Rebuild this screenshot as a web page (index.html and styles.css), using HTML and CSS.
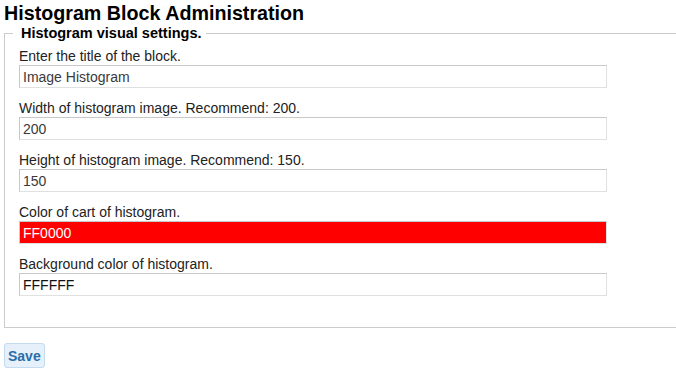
FILE: index.html
```html
<!DOCTYPE html>
<html>
<head>
<meta charset="utf-8">
<link rel="stylesheet" href="styles.css">
</head>
<body>
<h1 class="title">Histogram Block Administration</h1>
<form class="form">
  <fieldset class="box">
    <legend class="legend">Histogram visual settings.</legend>
    <div class="row">
      <label class="label">Enter the title of the block.</label>
      <input class="field" type="text" value="Image Histogram">
    </div>
    <div class="row">
      <label class="label">Width of histogram image. Recommend: 200.</label>
      <input class="field" type="text" value="200">
    </div>
    <div class="row">
      <label class="label">Height of histogram image. Recommend: 150.</label>
      <input class="field" type="text" value="150">
    </div>
    <div class="row">
      <label class="label">Color of cart of histogram.</label>
      <input class="field field-red" type="text" value="FF0000">
    </div>
    <div class="row">
      <label class="label">Background color of histogram.</label>
      <input class="field field-dark" type="text" value="FFFFFF">
    </div>
  </fieldset>
  <button class="save" type="button">Save</button>
</form>
</body>
</html>
```

FILE: styles.css
```css
html, body {
  margin: 0;
  padding: 0;
  background: #fff;
}
body {
  font-family: "Liberation Sans", Arial, sans-serif;
  color: #222;
  width: 700px;
  padding: 2px 0 0 4px;
}
.title {
  margin: 0;
  font-size: 19.7px;
  line-height: 23px;
  font-weight: bold;
  color: #000;
}
.form {
  margin: 0;
}
.box {
  margin: 0;
  border: 1px solid #ccc;
  border-right: none;
  padding: 0 0 31px 14px;
}
.legend {
  font-size: 14.5px;
  font-weight: bold;
  color: #000;
  padding: 0 4px 0 8px;
  margin-left: -6px;
  line-height: 16px;
}
.row {
  display: flex;
  flex-direction: column;
  margin-top: 7px;
}
.row + .row {
  margin-top: 12px;
}
.label {
  font-size: 14px;
  line-height: 17px;
  color: #222;
}
.field {
  box-sizing: border-box;
  width: 588px;
  height: 23px;
  margin: 0;
  padding: 0 3px;
  font-family: "Liberation Sans", Arial, sans-serif;
  font-size: 14px;
  color: #3a3a3a;
  background: #fff;
  border: 1px solid #e0e0e0;
  border-top-color: #c8c8c8;
  border-left-color: #c8c8c8;
  outline: none;
}
.field-red {
  background: #ff0000;
  color: #fff;
}
.field-dark {
  color: #111;
}
.save {
  margin-top: 15px;
  font-family: "Liberation Sans", Arial, sans-serif;
  font-size: 14px;
  font-weight: bold;
  color: #2b6da8;
  background: #e6f0fb;
  border: 1px solid #c4daef;
  border-radius: 3px;
  padding: 2px 3px;
  height: 25px;
}
```
